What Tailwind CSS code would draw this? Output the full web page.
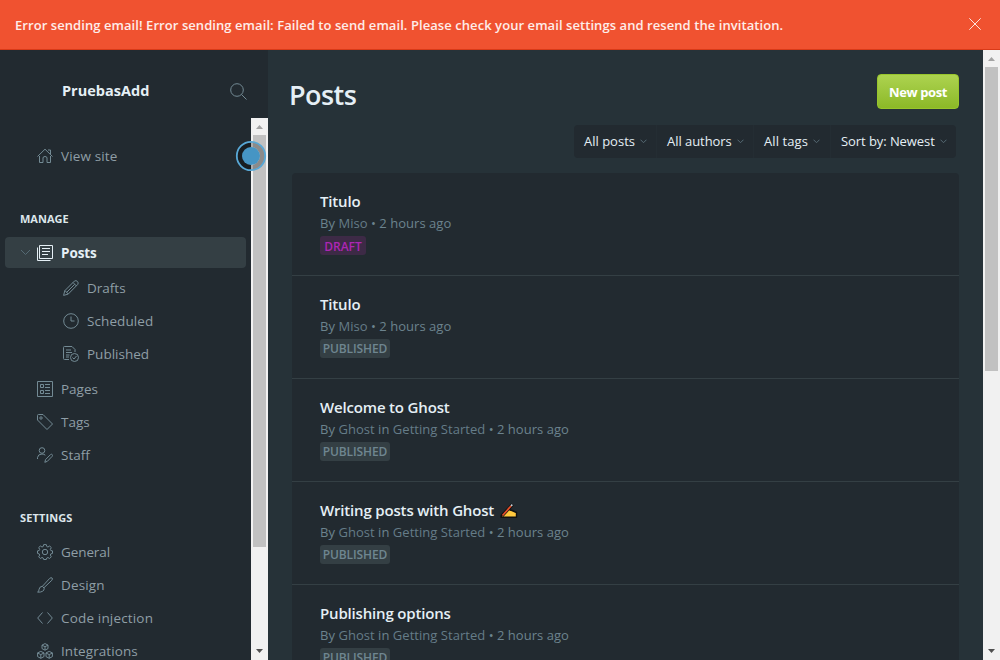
<!DOCTYPE html>
<html lang="en">
<head>
<meta charset="utf-8">
<title>Posts</title>
<script src="https://cdn.jsdelivr.net/npm/@tailwindcss/browser@4"></script>
</head>
<body class="h-[660px] w-[1000px] overflow-hidden bg-[#263238] font-['Open_Sans','Noto_Sans',sans-serif] whitespace-nowrap flex flex-col">
<header class="h-[50px] shrink-0 bg-[#f05230] border-b border-[#d93a18] flex items-center justify-between pl-[15px] pr-[18px] text-white/90">
  <span class="pt-[2px] text-[13px] font-semibold tracking-[0.067px]">Error sending email! Error sending email: Failed to send email. Please check your email settings and resend the invitation.</span>
  <svg class="size-[14px] -mt-px" viewBox="0 0 14 14" fill="none" stroke="#fff" stroke-opacity=".85"><path d="M1.3 1.3 12.7 12.7M12.7 1.3 1.3 12.7"/></svg>
</header>
<div class="flex flex-1 min-h-0">
  <aside class="w-[268px] bg-[#222a30] flex flex-col relative">
    <div class="h-[68px] shrink-0 flex items-center justify-between pl-[62px] pr-[21px] pt-[14px]">
      <span class="text-[14.5px] font-bold text-[#e5eff5] tracking-[0.02px] leading-[20px] -mt-px">PruebasAdd</span>
      <svg class="size-[17px]" viewBox="0 0 17 17" fill="none" stroke="#738a94"><circle cx="7" cy="7" r="6.3"/><path d="m11.5 11.5 5 5"/></svg>
    </div>
    <div class="flex flex-1 min-h-0">
      <nav class="flex-1 overflow-hidden pt-[22px] text-[13.5px] text-[#8f9ea6] [&_svg]:stroke-[#738a94] [&_svg]:fill-none [&_svg]:shrink-0 [&_svg]:-mt-px">
        <div class="h-[33px] pl-[37px] flex items-center gap-2"><svg class="size-4" viewBox="0 0 16 16"><path d="M.5 8.5 8 1.2l7.500 7.300M2.500 8v6.500h3.500V10q0-1.500 2-1.500t2 1.500v4.500h3.500V8M11 2h2.500v4"/></svg><span class="tracking-[0.13px]">View site</span></div>
        <h4 class="mt-[37px] h-[18px] pl-5 text-[11px] leading-[18px] font-bold text-[#dde6eb]">MANAGE</h4>
        <div class="mt-[9px] ml-[5px] mr-[5px] h-[31px] rounded bg-[#343f44] pl-[15px] flex items-center text-[#e5eff5] font-bold"><svg class="w-[11px] h-[7px] mr-[6px]" viewBox="0 0 11 7"><path stroke="#546a74" d="m1 1 4.500 4.500L10 1"/></svg><svg class="size-4 mr-2 mt-0! stroke-[#e5eff5]!" viewBox="0 0 16 16"><path d="M2.500.5h13v13h-13zM.5 2.500v13h13M5 3.500h8M5 6.500h8M5 9.500h6"/></svg><span class="pt-[2px] tracking-[-0.1px]">Posts</span></div>
        <div class="mt-1 h-[33px] pl-[63px] flex items-center gap-2"><svg class="size-4" viewBox="0 0 16 16"><path d="M.6 15.400 1.800 10.700 11.400 1.100q1.600-1.100 3 .3 1.500 1.500.3 3.100L5.200 14.100zM10 2.500 13.500 6M2 10.500l3.300 3.600M3.700 12.300l8-8"/></svg><span>Drafts</span></div>
        <div class="h-[33px] pl-[63px] flex items-center gap-2"><svg class="size-4" viewBox="0 0 16 16"><circle cx="8" cy="8" r="7.300"/><path d="M8 3.500V8h3.500"/></svg><span class="tracking-[0.08px]">Scheduled</span></div>
        <div class="h-[33px] pl-[63px] flex items-center gap-2"><svg class="size-4" viewBox="0 0 16 16"><path d="M6 13.500H1.500q-1 0-1-1v-11q0-1 1-1H9l3 3V6M3 4h5M3 6.500h6M3 9h3.500M3 11h3"/><circle cx="11.500" cy="11.500" r="4"/><path d="m9.500 11.500 1.500 1.500 2.500-3"/></svg><span>Published</span></div>
        <div class="mt-[2px] h-[33px] pl-[37px] flex items-center gap-2"><svg class="size-4" viewBox="0 0 16 16"><path d="M.5.5h15v15H.5zM3.500 3.500h3v3h-3zM3.500 9.500h3v3h-3zM8 3.500h5M8 6.500h5M8 9.500h5M8 12.500h5"/></svg><span>Pages</span></div>
        <div class="h-[33px] pl-[37px] flex items-center gap-2"><svg class="size-4" viewBox="0 0 16 16"><path d="M.5 1.500q0-1 1-1H6L15.500 10 10 15.500.5 6z"/><circle cx="4" cy="4" r="1.200"/></svg><span>Tags</span></div>
        <div class="h-[33px] pl-[37px] flex items-center gap-2"><svg class="size-4" viewBox="0 0 16 16"><circle cx="5" cy="3.500" r="2.800"/><path d="M.5 12V10.500Q1 7 5 7q2 0 3.300 1.200M7.800 15.300l.8-2.800L13.500 7.600q1-.8 1.700 0 .7.800 0 1.700L10.400 14.300z"/></svg><span>Staff</span></div>
        <h4 class="mt-[37px] h-[18px] pl-5 text-[11px] leading-[18px] font-bold text-[#dde6eb] tracking-[0.12px]">SETTINGS</h4>
        <div class="mt-[9px] h-[33px] pl-[37px] flex items-center gap-2"><svg class="size-4" viewBox="0 0 16 16"><path stroke-linejoin="round" d="M6.700.6h2.600l.5 1.900 1.100.5 1.800-1 1.600 1.600-1 1.800.5 1.100 1.700.4v2.500l-1.700.5-.5 1.200 1 1.700-1.700 1.700-1.700-1-1.100.5-.5 1.500H6.700l-.5-1.500-1.200-.5-1.700 1-1.600-1.700 1-1.700-.5-1.200-1.700-.5V6.900l1.700-.4.5-1.100-1-1.800L3.300 2 5 3l1.200-.5z"/><circle cx="8" cy="8" r="2.700"/></svg><span class="tracking-[-0.1px]">General</span></div>
        <div class="h-[33px] pl-[37px] flex items-center gap-2"><svg class="size-4" viewBox="0 0 16 16"><path d="M5.500 9.200 12.800 1.300q1.300-1.100 2.300-.3.800 1-.3 2.300L7 10.700M5.300 9.300l1.900 1.900q.2 4.100-6.600 4 1.400-1 1.500-3 .4-2.700 3.200-2.900z"/></svg><span class="tracking-[0.15px]">Design</span></div>
        <div class="h-[33px] pl-[37px] flex items-center gap-2"><svg class="size-4" viewBox="0 0 16 16"><path d="M5.500 2.500.7 8l4.800 5.500M10.500 2.500 15.300 8l-4.800 5.500"/></svg><span class="tracking-[0.17px]">Code injection</span></div>
        <div class="h-[33px] pl-[37px] flex items-center gap-2"><svg class="size-4" viewBox="0 0 16 16"><path d="M8 .6l3 1.500v3.500L8 7.200 5 5.600V2.100zM5 2.200l3 1.500 3-1.500M8 3.700v3.500M3.800 8.400l3.200 1.500v3.700l-3.200 1.700-3.200-1.700V9.900zM.6 10l3.200 1.600L7 10M3.800 11.600v3.700M12.200 8.400l3.200 1.500v3.700l-3.200 1.700L9 13.600V9.900zM9 10l3.200 1.600 3.200-1.600M12.200 11.600v3.700"/></svg><span class="tracking-[0.08px]">Integrations</span></div>
      </nav>
      <div class="w-[17px] bg-[#f1f1f1] flex flex-col items-center">
        <svg class="w-[17px] h-[17px] shrink-0" viewBox="0 0 17 17"><path fill="#a3a3a3" d="M5 11h7L8.500 7z"/></svg>
        <div class="w-[13px] h-[412px] bg-[#c1c1c1]"></div>
        <svg class="w-[17px] h-[17px] mt-auto" viewBox="0 0 17 17"><path fill="#505050" d="M5 6h7l-3.500 4z"/></svg>
      </div>
    </div>
    <svg class="absolute left-[235px] top-[90px] size-8" viewBox="0 0 32 32" fill="none"><circle cx="16" cy="16" r="11.500" stroke="#000" stroke-opacity=".28" stroke-width="5"/><circle cx="16" cy="16" r="14.200" stroke="#58a8d6" stroke-width="1.800"/><circle cx="16" cy="16" r="9" fill="#4695c4"/></svg>
  </aside>
  <main class="flex-1 min-w-0 overflow-hidden pl-[24px] pr-[24px]">
    <div class="h-[75px] pt-[24px] flex justify-between items-start">
      <h1 class="-ml-[3px] text-[27px] leading-[42px] font-semibold text-[#e5eff5] tracking-[-0.55px]">Posts</h1>
      <button class="w-[82px] h-[35px] pt-[2px] rounded-[4px] border border-[#98c62c] bg-linear-to-b from-[#add34f] to-[#8cb926] text-white text-[13px] font-bold tracking-[-0.4px]">New post</button>
    </div>
    <div class="ml-auto mr-[3px] w-[382px] h-[33px] rounded bg-[#222a30] flex text-[13px] text-[#e5eff5] [&>div]:flex [&>div]:items-center [&>div]:pl-[10px] [&_svg]:w-[7px] [&_svg]:h-[5px] [&_svg]:ml-[5px] [&_svg]:fill-none [&_svg]:stroke-[#566a74]">
      <div class="w-[83px] border-r border-[#242d33]"><span>All posts</span><svg viewBox="0 0 7 5"><path d="m.5.7 3 3 3-3"/></svg></div>
      <div class="w-[97px] border-r border-[#242d33]"><span class="tracking-[-0.05px]">All authors</span><svg viewBox="0 0 7 5"><path d="m.5.7 3 3 3-3"/></svg></div>
      <div class="w-[77px] border-r border-[#242d33]"><span class="tracking-[0.08px]">All tags</span><svg viewBox="0 0 7 5"><path d="m.5.7 3 3 3-3"/></svg></div>
      <div class="flex-1"><span class="tracking-[-0.07px]">Sort by: Newest</span><svg viewBox="0 0 7 5"><path d="m.5.7 3 3 3-3"/></svg></div>
    </div>
    <section class="mt-[15px] w-[667px] rounded-t bg-[#222a30] [&>article]:h-[103px] [&>article]:border-b [&>article]:border-[#343f44] [&>article]:pl-7 [&>article]:pt-[17px] [&_h3]:text-[15px] [&_h3]:leading-[22px] [&_h3]:font-semibold [&_h3]:tracking-[-0.17px] [&_h3]:text-[#e5eff5] [&_p]:text-[13px] [&_p]:leading-[22px] [&_p]:tracking-[0.035px] [&_p]:text-[#6c838e] [&_b]:font-medium [&_b]:text-[#657c88]">
      <article><h3>Titulo</h3><p>By <b>Miso</b> • 2 hours ago</p><div class="mt-[2px] w-[46px] h-[19px] rounded-[3px] bg-[#3d2a46] text-[#ad26b4] text-[12px] leading-[21px] font-semibold text-center">DRAFT</div></article>
      <article><h3>Titulo</h3><p>By <b>Miso</b> • 2 hours ago</p><div class="mt-[2px] w-[70px] h-[19px] rounded-[3px] bg-[#343f44] text-[#6f8690] text-[12px] leading-[20px] font-semibold tracking-[-0.1px] text-center">PUBLISHED</div></article>
      <article><h3>Welcome to Ghost</h3><p>By <b>Ghost</b> in <b>Getting Started</b> • 2 hours ago</p><div class="mt-[2px] w-[70px] h-[19px] rounded-[3px] bg-[#343f44] text-[#6f8690] text-[12px] leading-[20px] font-semibold tracking-[-0.1px] text-center">PUBLISHED</div></article>
      <article><h3 class="flex items-center"><span>Writing posts with Ghost</span><svg class="w-[19px] h-[16px] ml-[5px] mt-[2px]" viewBox="0 0 19 16"><path d="M2 14.300q0-3 3-5l3-3q2-1.300 3 .7l2 .5 4.500 2v4.800z" fill="#ffc83d" stroke="#111" stroke-width="1.400" stroke-linejoin="round"/><path d="M3 13 13.500 1.500" stroke="#111" stroke-width="3.200"/><path d="M3.500 12.500 12 3" stroke="#e8502a" stroke-width="1.700"/><path d="m12 3 1.300-1.400" stroke="#c9d2d8" stroke-width="1.600"/></svg></h3><p>By <b>Ghost</b> in <b>Getting Started</b> • 2 hours ago</p><div class="mt-[2px] w-[70px] h-[19px] rounded-[3px] bg-[#343f44] text-[#6f8690] text-[12px] leading-[20px] font-semibold tracking-[-0.1px] text-center">PUBLISHED</div></article>
      <article><h3>Publishing options</h3><p>By <b>Ghost</b> in <b>Getting Started</b> • 2 hours ago</p><div class="mt-[2px] w-[70px] h-[19px] rounded-[3px] bg-[#343f44] text-[#6f8690] text-[12px] leading-[20px] font-semibold tracking-[-0.1px] text-center">PUBLISHED</div></article>
    </section>
  </main>
  <div class="w-[17px] bg-[#f1f1f1] flex flex-col items-center">
    <svg class="w-[17px] h-[17px] shrink-0" viewBox="0 0 17 17"><path fill="#a3a3a3" d="M5 11h7L8.500 7z"/></svg>
    <div class="w-[13px] h-[304px] bg-[#c1c1c1]"></div>
    <svg class="w-[17px] h-[17px] mt-auto" viewBox="0 0 17 17"><path fill="#505050" d="M5 6h7l-3.500 4z"/></svg>
  </div>
</div>
</body>
</html>
